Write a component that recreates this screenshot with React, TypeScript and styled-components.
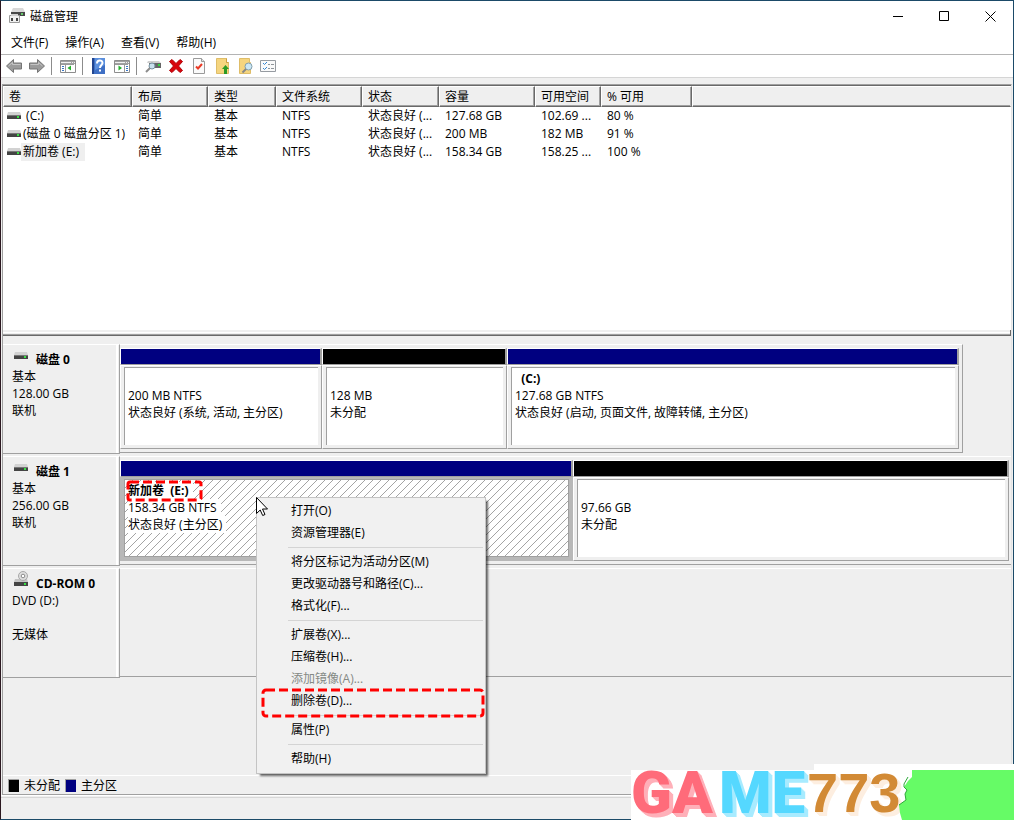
import React from 'react';
import styled, { createGlobalStyle, css } from 'styled-components';

const FACE = '#efefef';
const SHADE = '#a0a0a0';
const DARK = '#696969';
const NAVY = '#000080';

const GlobalStyle = createGlobalStyle`
  * { box-sizing: border-box; }
  body {
    margin: 0;
    background: ${FACE};
    color: #000;
    font: 12px/17px "Open Sans", "Noto Sans CJK SC", sans-serif;
  }
  button {
    font: inherit;
    color: inherit;
    background: none;
    border: 0;
    padding: 0;
    text-align: left;
  }
`;

const Window = styled.div`
  position: relative;
  display: flex;
  flex-direction: column;
  min-height: 100vh;
  border: 1px solid #1b4a68;
  border-left-color: #2b1820;
`;

const TitleBar = styled.header`
  display: flex;
  align-items: center;
  height: 30px;
  padding-left: 8px;
  background: #fff;
`;

const Title = styled.h1`
  flex: 1;
  margin: 0 0 0 5px;
  font-size: 12px;
  font-weight: 400;
`;

const WindowButton = styled.button`
  display: grid;
  place-items: center;
  width: 46px;
  height: 28px;
`;

const MenuBar = styled.nav`
  display: flex;
  gap: 17px;
  height: 23px;
  padding: 3px 10px;
  background: #fff;
`;

const Toolbar = styled.div`
  display: flex;
  align-items: center;
  height: 24px;
  padding-left: 5px;
  background: #fff;
  border-top: 1px solid #b4b4b4;
  border-bottom: 1px solid #d5d5d5;
`;

const ToolButton = styled.button`
  display: block;
  width: 16px;
  height: 16px;
  margin-right: 7px;
  svg { display: block; }
`;

const ToolDivider = styled.span`
  width: 1px;
  height: 18px;
  margin: 0 8px 0 -1px;
  background: #8c8c8c;
`;

const Content = styled.main`
  flex: 1;
  display: flex;
  flex-direction: column;
  margin: 6px 1px 0;
  border: 1px solid ${SHADE};
  border-right-color: #e3e3e3;
`;

const VolumePane = styled.section`
  height: 245px;
  background: #fff;
  border-top: 1px solid ${DARK};
`;

const VolumeTable = styled.table`
  width: 100%;
  table-layout: fixed;
  border-collapse: separate;
  border-spacing: 0;
`;

const HeadCell = styled.th<{ $width?: number }>`
  width: ${(p) => (p.$width ? `${p.$width}px` : 'auto')};
  height: 21px;
  padding: 0 0 0 5px;
  font-weight: 400;
  line-height: 18px;
  text-align: left;
  white-space: nowrap;
  background: ${FACE};
  border: 1px solid #fff;
  border-right-color: ${DARK};
  border-bottom-color: ${DARK};
  box-shadow: inset -1px -1px ${SHADE};
  &:last-child {
    border-right-color: ${FACE};
    box-shadow: inset 0 -1px ${SHADE};
  }
`;

const Cell = styled.td`
  height: 18px;
  padding: 0 0 0 6px;
  line-height: 18px;
  white-space: nowrap;
  overflow: hidden;
`;

const NameCell = styled(Cell)`
  padding-left: 4px;
`;

const VolumeName = styled.span<{ $selected?: boolean }>`
  display: flex;
  align-items: center;
  span {
    padding: 0 6px 0 2px;
    white-space: pre;
    background: ${(p) => (p.$selected ? FACE : 'transparent')};
  }
`;

const Splitter = styled.div`
  height: 6px;
  margin-bottom: 8px;
  background: ${FACE};
  border-bottom: 1px solid ${DARK};
  border-right: 1px solid ${DARK};
  box-shadow: inset 0 -1px ${SHADE}, inset 0 2px ${FACE}, inset 0 3px #fff;
`;

const DiskPane = styled.section`
  flex: 1;
  background: ${FACE};
`;

const DiskRow = styled.article`
  display: grid;
  grid-template-columns: 117px 1fr;
  align-items: start;
  min-height: 112px;
`;

const DiskLabel = styled.div`
  height: 110px;
  padding: 6px 9px;
  border-top: 1px solid #fff;
  border-right: 1px solid ${SHADE};
  border-bottom: 1px solid ${SHADE};
  box-shadow: inset -1px 0 ${FACE}, inset -3px 0 #fff;
`;

const DiskName = styled.h2<{ $disc?: boolean }>`
  display: flex;
  align-items: flex-start;
  gap: 8px;
  margin: 0;
  padding-left: 2px;
  font-size: 12px;
  line-height: 17px;
  svg { flex: none; margin-top: ${(p) => (p.$disc ? '-4px' : '1px')}; }
`;

const Line = styled.div`
  min-height: 17px;
  white-space: pre;
`;

const PartitionTrack = styled.div<{ $columns: string; $short?: boolean }>`
  display: grid;
  grid-template-columns: ${(p) => p.$columns};
  height: 109px;
  margin-right: ${(p) => (p.$short ? '48px' : '0')};
  padding: ${(p) => (p.$short ? '3px 3px 3px 0' : '3px 2px 3px 0')};
  border-top: 1px solid #fff;
  border-bottom: 1px solid ${SHADE};
  border-right: ${(p) => (p.$short ? `1px solid ${SHADE}` : '0')};
`;

const Partition = styled.div`
  display: flex;
  flex-direction: column;
  min-width: 0;
`;

const Bar = styled.div<{ $color: string }>`
  height: 17px;
  background: ${(p) => p.$color};
  border: 1px solid #fff;
  border-right: 2px solid ${SHADE};
  border-bottom-color: ${SHADE};
`;

const PartitionFrame = styled.div<{ $selected?: boolean }>`
  flex: 1;
  display: grid;
  padding: 1px 3px 3px;
  border: 1px solid #fff;
  border-right-color: ${SHADE};
  border-bottom-color: ${SHADE};
  ${(p) => p.$selected && css`
    background: #b8b8b8;
    border-color: #b8b8b8;
  `}
`;

const PartitionBody = styled.div<{ $selected?: boolean }>`
  padding: 2px 3px;
  background-color: #fff;
  border-top: 1px solid ${SHADE};
  border-left: 1px solid ${SHADE};
  ${(p) => p.$selected && css`
    border: 1px solid ${SHADE};
    background-image: linear-gradient(135deg, transparent 44%, #a4a4a4 48% 52%, transparent 56%);
    background-size: 8px 8px;
    ${Line} { width: max-content; padding-right: 4px; background: #fff; }
  `}
`;

const VolumeTitle = styled(Line)`
  font-weight: 700;
`;

const MarkedTitle = styled.span`
  position: relative;
`;

const Highlight = styled.svg<{ $place: 'volume' | 'item' }>`
  position: absolute;
  overflow: visible;
  pointer-events: none;
  fill: none;
  stroke: #f00;
  stroke-width: 3;
  ${(p) => p.$place === 'volume'
    ? css`left: 0; top: 0; width: 73px; height: 18px; stroke-dasharray: 9 4;`
    : css`left: 6px; top: 0; width: 220px; height: 26px; stroke-dasharray: 9 4;`}
`;

const Legend = styled.footer`
  display: flex;
  align-items: center;
  height: 19px;
  padding-left: 5px;
  border-top: 1px solid #fff;
`;

const LegendItem = styled.span`
  display: flex;
  align-items: center;
  gap: 5px;
  margin-right: 5px;
`;

const Swatch = styled.i<{ $color: string }>`
  width: 11px;
  height: 13px;
  background: ${(p) => p.$color};
  border: 1px solid ${SHADE};
  border-width: 1px 0 0 1px;
`;

const StatusBar = styled.div`
  height: 24px;
  border-top: 1px solid #fff;
  box-shadow: inset 0 1px ${FACE}, inset 0 2px #d7d7d7;
`;

const ContextMenu = styled.div`
  position: absolute;
  left: 255px;
  top: 496px;
  z-index: 2;
  width: 230px;
  padding: 2px 2px 3px;
  background: #f1f1f1;
  border: 1px solid #c4c4c4;
  box-shadow: 3px 3px 2px -1px rgba(0, 0, 0, 0.6);
`;

const MenuItem = styled.button`
  position: relative;
  display: block;
  width: 100%;
  height: 22px;
  padding-left: 32px;
  line-height: 22px;
  &:disabled { color: #858985; }
`;

const ItemMark = styled.div`
  position: relative;
  margin: 0 -2px;
  padding: 0 2px;
`;

const MenuRule = styled.hr`
  height: 1px;
  margin: 3px 0 3px 29px;
  border: 0;
  background: #d4d4d4;
`;

const Pointer = styled.svg`
  position: absolute;
  left: 255px;
  top: 496px;
  z-index: 3;
`;

const Watermark = styled.aside`
  position: absolute;
  right: -1px;
  bottom: -1px;
  z-index: 4;
  display: flex;
  width: 383px;
  height: 50px;
  background: #fff;
  &::before {
    content: '';
    position: absolute;
    right: 0;
    top: -6px;
    width: 200px;
    height: 6px;
    background: #fff;
  }
`;

const Wordmark = styled.span<{ $tone: string; $edge: string; $digits?: boolean }>`
  width: ${(p) => (p.$digits ? '92px' : '88px')};
  color: ${(p) => p.$tone};
  font-family: ${(p) => (p.$digits ? '"Liberation Sans"' : 'Roboto')}, sans-serif;
  font-size: ${(p) => (p.$digits ? '56px' : '60px')};
  font-weight: 900;
  line-height: 46px;
  white-space: nowrap;
  text-shadow: 1px 1px ${(p) => p.$edge}, 2px 2px ${(p) => p.$edge}, 3px 3px ${(p) => p.$edge}, 4px 4px ${(p) => p.$edge};
`;

const GreenPatch = styled.svg`
  position: absolute;
  right: 0;
  top: 0;
`;

const DriveIcon = () => (
  <svg width="14" height="8" viewBox="0 0 14 8" aria-hidden="true">
    <path d="M1 0h12l1 3H0z" fill="#d2d2d2" />
    <path d="M0 3h14v4H0z" fill="#444" />
    <path d="M0 3h14v1H0z" fill="#777" />
    <path d="M10 4h2v2h-2z" fill="#39e045" />
  </svg>
);

const DiscIcon = () => (
  <svg width="14" height="16" viewBox="0 0 14 16" aria-hidden="true">
    <path d="M1 8h12l1 3H0z" fill="#c4c4c4" />
    <circle cx="9" cy="5" r="4.500" fill="#dedede" stroke="#a7a7a7" />
    <circle cx="9" cy="5" r="1.800" fill="#fff" stroke="#8b8b8b" />
    <path d="M0 11h14v4H0z" fill="#444" />
    <path d="M10 12h2v2h-2z" fill="#39e045" />
  </svg>
);

const AppIcon = () => (
  <svg width="16" height="16" viewBox="0 0 16 16" aria-hidden="true">
    <path d="M4 0h10l2 4H2z" fill="#d8d8d8" />
    <path d="M2 4h14v4H2z" fill="#474747" />
    <path d="M12 5h2v2h-2z" fill="#65c96a" />
    <path d="M.5 7.500h10v7H.5z" fill="#f0f0f0" stroke="#9a9a9a" />
    <path d="M2 6h7v2H2z" fill="#d0d0d0" />
    <path d="M2 10h2v3H2zM7 10h2v3H7z" fill="#444" />
  </svg>
);

const Svg16 = ({ children }: { children: React.ReactNode }) => (
  <svg width="16" height="16" viewBox="0 0 16 16" aria-hidden="true">{children}</svg>
);

const arrowPath = 'M.5 8 7.500 1.500V5h8v6h-8v3.500z';

const BackIcon = () => (
  <Svg16>
    <path d={arrowPath} fill="#9b9b9b" stroke="#757575" />
    <path d="M2.500 8 6.500 4.500V6.500h8" fill="none" stroke="#c4c4c4" />
  </Svg16>
);

const ForwardIcon = () => (
  <Svg16>
    <g transform="matrix(-1 0 0 1 16 0)">
      <path d={arrowPath} fill="#9b9b9b" stroke="#757575" />
      <path d="M2.500 8 6.500 4.500V6.500h8" fill="none" stroke="#c4c4c4" />
    </g>
  </Svg16>
);

const PanelFrame = () => (
  <>
    <path d="M.5 2.500h15v12H.5z" fill="#fff" stroke="#8d8d8d" />
    <path d="M1 3h14v3H1z" fill="#a2a2a2" />
    <path d="M1 4h10v1H1zM12 4h1v1h-1zM14 4h1v1h-1z" fill="#f1f1f1" />
  </>
);

const TreeIcon = () => (
  <Svg16>
    <PanelFrame />
    <path d="M5.500 6v8M14 6.500H1" stroke="#999" />
    <path d="M2 8h2v1H2zM2 10h2v1H2zM2 12h2v1H2z" fill="#3a76c4" />
    <path d="M11 7.500v5L7.500 10z" fill="#22b02a" />
  </Svg16>
);

const ActionPaneIcon = () => (
  <Svg16>
    <PanelFrame />
    <path d="M10.500 6v8M14 6.500H1" stroke="#999" />
    <path d="M12 8h2v1h-2zM12 10h2v1h-2zM12 12h2v1h-2z" fill="#3a76c4" />
    <path d="M4.500 7.500v5L8 10z" fill="#22b02a" />
  </Svg16>
);

const HelpIcon = () => (
  <Svg16>
    <path d="M1 0h13v16H1z" fill="#3e6fc4" />
    <path d="M1 0h2v16H1z" fill="#22458f" />
    <path d="M4 0h10v7L4 12z" fill="#5b8fdd" />
    <path d="M6 5.500c0-4 5.500-4 5.500-.5 0 2-2.500 2.200-2.500 5M9 11.500v2" fill="none" stroke="#fff" strokeWidth="2" />
  </Svg16>
);

const RescanIcon = () => (
  <Svg16>
    <path d="M3 3h11l2 2H2z" fill="#d0d0d0" />
    <path d="M4 5h12v5H4z" fill="#666" />
    <path d="M13 6h2v2h-2z" fill="#32d83d" />
    <circle cx="7" cy="8" r="3" fill="#c8dfec" stroke="#75909f" />
    <path d="m5 10-4 4" stroke="#8b8b8b" strokeWidth="2" />
  </Svg16>
);

const DeleteIcon = () => (
  <Svg16>
    <path d="m1.500 3.500 2.500-2 4 4 4-4 2.500 2-4 4.500 4 4.500-2.500 2-4-4-4 4-2.500-2 4-4.500z" fill="#d9040b" stroke="#b00006" />
  </Svg16>
);

const CheckPageIcon = () => (
  <Svg16>
    <path d="M2.500.5h8l3 3v12h-11z" fill="#fafafa" stroke="#9a9a9a" />
    <path d="M10.500.5v3h3" fill="#e1e1e1" stroke="#9a9a9a" />
    <path d="m5 8.500 2 2L11 6" fill="none" stroke="#ea3a25" strokeWidth="2" />
  </Svg16>
);

const FolderUpIcon = () => (
  <Svg16>
    <path d="M2.500.5h10v4h2v11h-12z" fill="#f5d57f" stroke="#dfbd68" />
    <path d="M12.500.5v4h2" fill="none" stroke="#c99e42" />
    <path d="M11.500 7 8 11h2v5h3v-5h2z" fill="#2b9a25" />
  </Svg16>
);

const FolderSearchIcon = () => (
  <Svg16>
    <path d="M2.500.5h10v4h1v11h-11z" fill="#f5d57f" stroke="#dfbd68" />
    <circle cx="11.500" cy="8.500" r="3.500" fill="#cbe7f6" stroke="#829fac" />
    <path d="m9 11-3.500 3.500" stroke="#888" strokeWidth="2" />
  </Svg16>
);

const ListIcon = () => (
  <Svg16>
    <path d="M.5 2.500h15v11H.5z" fill="#fafafa" stroke="#969ba1" />
    <path d="m3 5 1.500 1.500L7 4M3 10l1.500 1.500L7 9" fill="none" stroke="#3486d2" />
    <path d="M8 6.500h2M11 6.500h3M8 10.500h2M11 10.500h3" stroke="#8f959a" />
  </Svg16>
);

const tools: Array<{ name: string; Icon?: React.FC }> = [
  { name: '后退', Icon: BackIcon },
  { name: '前进', Icon: ForwardIcon },
  { name: 'rule-1' },
  { name: '显示/隐藏控制台树', Icon: TreeIcon },
  { name: 'rule-2' },
  { name: '帮助', Icon: HelpIcon },
  { name: '显示/隐藏操作窗格', Icon: ActionPaneIcon },
  { name: 'rule-3' },
  { name: '重新扫描磁盘', Icon: RescanIcon },
  { name: '删除', Icon: DeleteIcon },
  { name: '属性', Icon: CheckPageIcon },
  { name: '打开', Icon: FolderUpIcon },
  { name: '浏览', Icon: FolderSearchIcon },
  { name: '设置', Icon: ListIcon },
];

const columns: Array<[string, number?]> = [
  ['卷', 129], ['布局', 76], ['类型', 68], ['文件系统', 86], ['状态', 77],
  ['容量', 96], ['可用空间', 66], ['% 可用', 91], [''],
];

const volumes = [
  { name: ' (C:)', cells: ['简单', '基本', 'NTFS', '状态良好 (...', '127.68 GB', '102.69 ...', '80 %'] },
  { name: '(磁盘 0 磁盘分区 1)', cells: ['简单', '基本', 'NTFS', '状态良好 (...', '200 MB', '182 MB', '91 %'] },
  { name: '新加卷 (E:)', selected: true, cells: ['简单', '基本', 'NTFS', '状态良好 (...', '158.34 GB', '158.25 ...', '100 %'] },
];

type PartitionData = { color: string; title?: string; lines: string[]; selected?: boolean };
type DiskData = {
  name: string; disc?: boolean; info: string[]; columns: string; short?: boolean; partitions: PartitionData[];
};

const disks: DiskData[] = [
  {
    name: '磁盘 0',
    info: ['基本', '128.00 GB', '联机'],
    columns: '202fr 185fr 452fr',
    short: true,
    partitions: [
      { color: NAVY, lines: ['200 MB NTFS', '状态良好 (系统, 活动, 主分区)'] },
      { color: '#000', lines: ['128 MB', '未分配'] },
      { color: NAVY, title: '  (C:)', lines: ['127.68 GB NTFS', '状态良好 (启动, 页面文件, 故障转储, 主分区)'] },
    ],
  },
  {
    name: '磁盘 1',
    info: ['基本', '256.00 GB', '联机'],
    columns: '453fr 436fr',
    partitions: [
      { color: NAVY, title: '新加卷  (E:)', selected: true, lines: ['158.34 GB NTFS', '状态良好 (主分区)'] },
      { color: '#000', lines: ['97.66 GB', '未分配'] },
    ],
  },
  { name: 'CD-ROM 0', disc: true, info: ['DVD (D:)', '', '无媒体'], columns: '1fr', partitions: [] },
];

const menuGroups: string[][] = [
  ['打开(O)', '资源管理器(E)'],
  ['将分区标记为活动分区(M)', '更改驱动器号和路径(C)...', '格式化(F)...'],
  ['扩展卷(X)...', '压缩卷(H)...', '添加镜像(A)...', '删除卷(D)...'],
  ['属性(P)'],
  ['帮助(H)'],
];

const PartitionView = ({ color, title, lines, selected }: PartitionData) => (
  <Partition>
    <Bar $color={color} />
    <PartitionFrame $selected={selected}>
      <PartitionBody $selected={selected}>
        <VolumeTitle>
          {selected ? (
            <MarkedTitle>
              {title}
              <Highlight $place="volume" aria-hidden="true"><rect width="100%" height="100%" rx="2" /></Highlight>
            </MarkedTitle>
          ) : title}
        </VolumeTitle>
        {lines.map((line) => <Line key={line}>{line}</Line>)}
      </PartitionBody>
    </PartitionFrame>
  </Partition>
);

export default function App() {
  return (
    <Window>
      <GlobalStyle />
      <TitleBar>
        <AppIcon />
        <Title>磁盘管理</Title>
        <WindowButton aria-label="最小化">
          <svg width="11" height="11"><path d="M0 5.500h10" stroke="#000" /></svg>
        </WindowButton>
        <WindowButton aria-label="最大化">
          <svg width="11" height="11"><path d="M.5.5h9v9h-9z" fill="none" stroke="#000" /></svg>
        </WindowButton>
        <WindowButton aria-label="关闭">
          <svg width="11" height="11"><path d="m.5.5 10 10m0-10-10 10" stroke="#000" /></svg>
        </WindowButton>
      </TitleBar>
      <MenuBar>
        {['文件(F)', '操作(A)', '查看(V)', '帮助(H)'].map((m) => <button key={m}>{m}</button>)}
      </MenuBar>
      <Toolbar>
        {tools.map(({ name, Icon }) => Icon
          ? <ToolButton key={name} aria-label={name}><Icon /></ToolButton>
          : <ToolDivider key={name} />)}
      </Toolbar>
      <Content>
        <VolumePane>
          <VolumeTable>
            <thead>
              <tr>{columns.map(([label, width]) => <HeadCell key={label} $width={width}>{label}</HeadCell>)}</tr>
            </thead>
            <tbody>
              {volumes.map((v) => (
                <tr key={v.name}>
                  <NameCell>
                    <VolumeName $selected={v.selected}><DriveIcon /><span>{v.name}</span></VolumeName>
                  </NameCell>
                  {v.cells.map((c, i) => <Cell key={i}>{c}</Cell>)}
                </tr>
              ))}
            </tbody>
          </VolumeTable>
        </VolumePane>
        <Splitter />
        <DiskPane>
          {disks.map((d) => (
            <DiskRow key={d.name}>
              <DiskLabel>
                <DiskName $disc={d.disc}>{d.disc ? <DiscIcon /> : <DriveIcon />}{d.name}</DiskName>
                {d.info.map((line, i) => <Line key={i}>{line}</Line>)}
              </DiskLabel>
              <PartitionTrack $columns={d.columns} $short={d.short}>
                {d.partitions.map((p, i) => <PartitionView key={i} {...p} />)}
              </PartitionTrack>
            </DiskRow>
          ))}
        </DiskPane>
        <Legend>
          <LegendItem><Swatch $color="#000" />未分配</LegendItem>
          <LegendItem><Swatch $color={NAVY} />主分区</LegendItem>
        </Legend>
      </Content>
      <StatusBar />
      <ContextMenu role="menu">
        {menuGroups.map((group, g) => (
          <React.Fragment key={g}>
            {g > 0 && <MenuRule />}
            {group.map((item) => item.startsWith('删除') ? (
              <ItemMark key={item}>
                <MenuItem role="menuitem">{item}</MenuItem>
                <Highlight $place="item" aria-hidden="true"><rect width="100%" height="100%" rx="3" /></Highlight>
              </ItemMark>
            ) : (
              <MenuItem key={item} role="menuitem" disabled={item.startsWith('添加')}>{item}</MenuItem>
            ))}
          </React.Fragment>
        ))}
      </ContextMenu>
      <Pointer width="13" height="20" viewBox="0 0 13 20" aria-hidden="true">
        <path d="M.5.5v16l3.700-3.500 2.500 5.500 2.300-1-2.500-5.500h5z" fill="#fff" stroke="#000" />
      </Pointer>
      <Watermark>
        <Wordmark $tone="#ff6b7a" $edge="#ffb0b9">GA</Wordmark>
        <Wordmark $tone="#55d8ff" $edge="#a8ebff">ME</Wordmark>
        <Wordmark $tone="#d28a35" $edge="#fdeee0" $digits>773</Wordmark>
        <GreenPatch width="115" height="50" viewBox="0 0 115 50" aria-hidden="true">
          <path d="M13 0h102v50H3l-2-7-1-8 7-5-1-6 2-4-3-3 4-6 4-4z" fill="#66fb66" />
          <path d="m9 7-4 7v3l3 3-2 4 1 6-7 5" fill="none" stroke="#2da83a" />
        </GreenPatch>
      </Watermark>
    </Window>
  );
}
